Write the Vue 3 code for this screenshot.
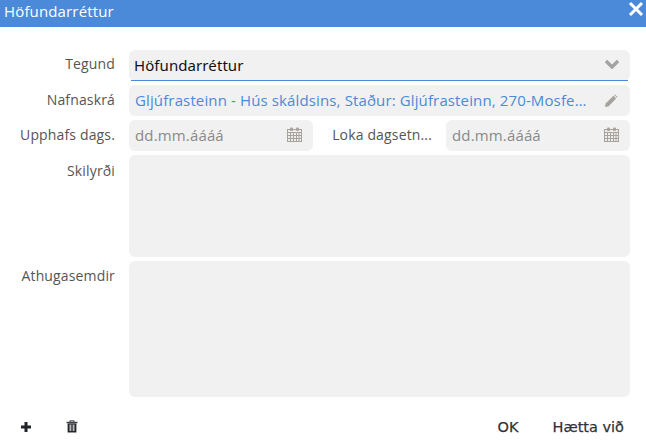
<script setup>
</script>

<template>
  <div class="dialog">
    <header class="head">
      <span class="title">Höfundarréttur</span>
      <svg class="close" viewBox="0 0 16 16" width="16" height="16"><path d="M2 2L14 14M14 2L2 14" stroke="#fff" stroke-width="3" fill="none" /></svg>
    </header>
    <main class="form">
      <div class="row">
        <label class="lab first">Tegund</label>
        <div class="field active">
          <span class="val dark">Höfundarréttur</span>
          <svg class="chev" viewBox="0 0 16 10" width="16" height="10"><path d="M2 2L8 8L14 2" stroke="#a3a3a3" stroke-width="3.4" fill="none" /></svg>
        </div>
      </div>
      <div class="row">
        <label class="lab">Nafnaskrá</label>
        <div class="field">
          <span class="val link">Gljúfrasteinn - Hús skáldsins, Staður: Gljúfrasteinn, 270-Mosfellsbær, Ísland</span>
          <svg class="pencil" viewBox="0 0 14 14" width="14" height="14"><path d="M1 13L1.6 9.6L9.4 1.8L12.2 4.6L4.4 12.4Z" fill="#a8a29c" /><path d="M10.2 1L11 .4L13.6 3L13 3.8Z" fill="#a8a29c" /></svg>
        </div>
      </div>
      <div class="row dates">
        <label class="lab">Upphafs dags.</label>
        <div class="field">
          <span class="val hint">dd.mm.áááá</span>
          <svg class="cal" viewBox="0 0 15 15" width="15" height="15">
            <rect x="0.5" y="2.5" width="14" height="12" fill="#eee" stroke="#a8a29c" />
            <rect x="3" y="0.5" width="3" height="3.5" rx="1" fill="#a8a29c" />
            <rect x="9" y="0.5" width="3" height="3.5" rx="1" fill="#a8a29c" />
            <path d="M0 5.5H15M1 8.5H14M1 11.5H14M3.5 5V14M6.5 5V14M9.5 5V14M12 5V14" stroke="#a8a29c" fill="none" />
          </svg>
        </div>
        <label class="lab">Loka dagsetn...</label>
        <div class="field">
          <span class="val hint">dd.mm.áááá</span>
          <svg class="cal" viewBox="0 0 15 15" width="15" height="15">
            <rect x="0.5" y="2.5" width="14" height="12" fill="#eee" stroke="#a8a29c" />
            <rect x="3" y="0.5" width="3" height="3.5" rx="1" fill="#a8a29c" />
            <rect x="9" y="0.5" width="3" height="3.5" rx="1" fill="#a8a29c" />
            <path d="M0 5.5H15M1 8.5H14M1 11.5H14M3.5 5V14M6.5 5V14M9.5 5V14M12 5V14" stroke="#a8a29c" fill="none" />
          </svg>
        </div>
      </div>
      <div class="row area-a">
        <label class="lab top">Skilyrði</label>
        <div class="field box"></div>
      </div>
      <div class="row area-b">
        <label class="lab">Athugasemdir</label>
        <div class="field box"></div>
      </div>
    </main>
    <footer class="foot">
      <div class="tools">
        <svg viewBox="0 0 12 12" width="12" height="12"><path d="M6 1V11M1 6H11" stroke="#212529" stroke-width="3" fill="none" /></svg>
        <svg class="trash" viewBox="0 0 12 13" width="12" height="13"><path d="M0.5 2.5H11.5" stroke="#3a3f45" stroke-width="1.4" /><path d="M4 2V.8H8V2" stroke="#3a3f45" fill="none" /><path d="M1.6 3.4H10.4V12.5H1.6Z" fill="#23272c" /><path d="M3.5 4.5H5.4V11H3.5ZM6.6 4.5H8.5V11H6.6Z" fill="#b5b5b5" /></svg>
      </div>
      <div class="acts">
        <span class="btn">OK</span>
        <span class="btn">Hætta við</span>
      </div>
    </footer>
  </div>
</template>

<style>
html, body { margin: 0; background: #fff; overflow: hidden; }
</style>

<style scoped>
.dialog {
  width: 646px;
  height: 447px;
  display: flex;
  flex-direction: column;
  font-family: "Open Sans", sans-serif;
  font-size: 14px;
  color: #555;
  background: #fff;
}
.head {
  height: 27px;
  flex: none;
  background: #4a8ad9;
  color: #fff;
  display: flex;
  justify-content: space-between;
  align-items: flex-start;
  padding: 0 2px 0 4px;
}
.title { font-size: 15px; line-height: 22px; letter-spacing: 0.15px; }
.close { margin-top: 1px; }
.form {
  flex: 1;
  display: flex;
  flex-direction: column;
  gap: 4px;
  padding: 23px 16px 0 0;
}
.row {
  display: grid;
  grid-template-columns: 115px 1fr;
  column-gap: 14px;
  height: 31px;
}
.dates {
  grid-template-columns: 115px 184px 105px 1fr;
  column-gap: 14px;
}
.area-a { height: 102px; }
.area-b { height: 136px; }
.lab {
  text-align: right;
  line-height: 30px;
  white-space: nowrap;
  letter-spacing: 0.15px;
}
.lab.first { line-height: 28px; }
.lab.top { line-height: 31px; }
.field {
  background: #f1f1f1;
  border-radius: 6px;
  display: flex;
  align-items: center;
  justify-content: space-between;
  padding: 0 10px 0 6px;
  box-sizing: border-box;
  min-width: 0;
  position: relative;
}
.active { padding-left: 5px; }
.active::after {
  content: "";
  position: absolute;
  left: 2px;
  right: 2px;
  bottom: 0;
  height: 1px;
  background: #4a8ad9;
}
.val {
  font-size: 15px;
  line-height: 20px;
  margin-top: -1px;
  white-space: nowrap;
  overflow: hidden;
  text-overflow: ellipsis;
  min-width: 0;
  letter-spacing: 0.08px;
}
.dark { color: #111; font-family: "Noto Sans", sans-serif; }
.link { color: #4a8ad9; max-width: 455px; letter-spacing: 0.13px; }
.hint { color: #8a8a8a; letter-spacing: 0.15px; }
.chev { flex: none; margin-right: 0; margin-top: -3px; }
.pencil { flex: none; margin-right: 2px; }
.cal { flex: none; margin-right: 1px; margin-top: -2px; }
.foot {
  height: 50px;
  flex: none;
  display: flex;
  justify-content: space-between;
  align-items: center;
  box-sizing: border-box;
  padding: 9px 22px 0 20px;
}
.tools { display: flex; align-items: center; gap: 34px; }
.acts { display: flex; gap: 34px; }
.btn {
  font-family: "DejaVu Sans", sans-serif;
  font-size: 14.5px;
  font-weight: 400;
  color: #2f3338;
  -webkit-text-stroke: 0.25px #2f3338;
}
</style>
